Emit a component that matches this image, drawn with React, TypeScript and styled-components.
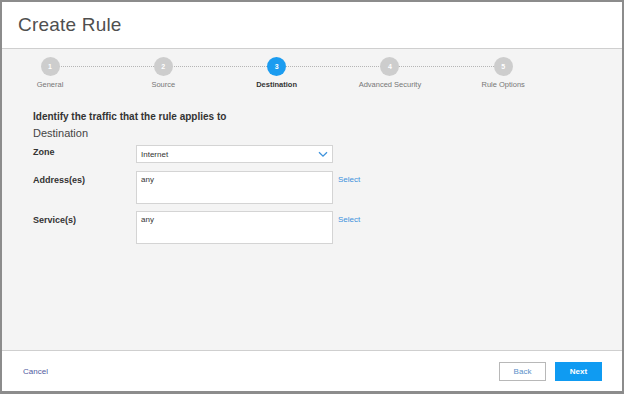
import React from "react";
import styled, { createGlobalStyle, css } from "styled-components";

const Global = createGlobalStyle`
  html, body { margin: 0; padding: 0; background: #fff; }
  body { font-family: "Liberation Sans", Arial, sans-serif; }
  * { box-sizing: border-box; }
`;

const Frame = styled.div`
  width: 624px;
  height: 394px;
  border: 2px solid #8c8c8c;
  border-bottom-width: 3px;
  display: flex;
  flex-direction: column;
  background: #fff;
`;

const Header = styled.div`
  height: 47px;
  flex: none;
  border-bottom: 1px solid #cfcfcf;
  padding: 12px 0 0 16px;
`;

const Title = styled.h1`
  margin: 0;
  font-size: 19px;
  font-weight: 400;
  color: #4f4f4f;
  letter-spacing: 0.2px;
`;

const Body = styled.div`
  flex: 1;
  background: #f4f4f4;
  border-bottom: 1px solid #cfcfcf;
  display: flex;
  flex-direction: column;
`;

const Stepper = styled.div`
  display: flex;
  gap: 75.3px;
  padding: 8px 0 0 29px;
  height: 62px;
`;

const Step = styled.div<{ $last?: boolean }>`
  width: 38px;
  display: flex;
  flex-direction: column;
  align-items: center;
  position: relative;
  ${(p) =>
    !p.$last &&
    css`
      &::after {
        content: "";
        position: absolute;
        top: 9px;
        left: 28px;
        width: 95px;
        border-top: 1px dotted #b5b5b5;
      }
    `}
`;

const Circle = styled.div<{ $active?: boolean }>`
  width: 19px;
  height: 19px;
  border-radius: 50%;
  background: ${(p) => (p.$active ? "#1b9cf0" : "#cdcdcd")};
  color: #fff;
  font-size: 7px;
  font-weight: 700;
  display: flex;
  align-items: center;
  justify-content: center;
  position: relative;
  z-index: 1;
`;

const StepLabel = styled.div<{ $active?: boolean }>`
  margin-top: 4px;
  font-size: 7.5px;
  white-space: nowrap;
  color: ${(p) => (p.$active ? "#333" : "#777")};
  font-weight: ${(p) => (p.$active ? 700 : 400)};
`;

const Content = styled.div`
  padding: 0 0 0 31px;
  display: flex;
  flex-direction: column;
`;

const Heading = styled.div`
  font-size: 10px;
  font-weight: 700;
  color: #333;
`;

const Section = styled.div`
  font-size: 11px;
  color: #444;
  margin-top: 5px;
`;

const Row = styled.div<{ $mt: number }>`
  display: flex;
  align-items: flex-start;
  margin-top: ${(p) => p.$mt}px;
`;

const Label = styled.div<{ $pt: number }>`
  width: 103px;
  flex: none;
  font-size: 9px;
  font-weight: 700;
  color: #333;
  padding-top: ${(p) => p.$pt}px;
`;

const SelectBox = styled.div`
  width: 197px;
  height: 18px;
  background: #fff;
  border: 1px solid #d4d4d4;
  display: flex;
  align-items: center;
  justify-content: space-between;
  padding: 0 4px 0 4px;
  font-size: 8px;
  color: #333;
`;

const TextBox = styled.div`
  width: 197px;
  height: 33px;
  background: #fff;
  border: 1px solid #d4d4d4;
  padding: 3px 4px;
  font-size: 8px;
  color: #333;
`;

const LinkText = styled.a`
  margin-left: 5px;
  padding-top: 4px;
  font-size: 8px;
  color: #3d92dc;
  text-decoration: none;
`;

const Footer = styled.div`
  height: 40px;
  flex: none;
  display: flex;
  align-items: center;
  padding: 0 20px 0 21px;
`;

const Cancel = styled.a`
  font-size: 8px;
  color: #4f5ba0;
  margin-top: 1px;
`;

const Spacer = styled.div`
  flex: 1;
`;

const Button = styled.button<{ $primary?: boolean }>`
  width: 47px;
  height: 19px;
  font-family: inherit;
  font-size: 8px;
  padding: 0;
  margin-left: 9px;
  border: 1px solid ${(p) => (p.$primary ? "#0f9bf2" : "#b8b8b8")};
  background: ${(p) => (p.$primary ? "#0f9bf2" : "#fff")};
  color: ${(p) => (p.$primary ? "#fff" : "#5a8fc8")};
  font-weight: ${(p) => (p.$primary ? 700 : 400)};
`;

const steps = ["General", "Source", "Destination", "Advanced Security", "Rule Options"];

export default function App() {
  return (
    <>
      <Global />
      <Frame>
        <Header>
          <Title>Create Rule</Title>
        </Header>
        <Body>
          <Stepper>
            {steps.map((s, i) => (
              <Step key={s} $last={i === steps.length - 1}>
                <Circle $active={i === 2}>{i + 1}</Circle>
                <StepLabel $active={i === 2}>{s}</StepLabel>
              </Step>
            ))}
          </Stepper>
          <Content>
            <Heading>Identify the traffic that the rule applies to</Heading>
            <Section>Destination</Section>
            <Row $mt={6}>
              <Label $pt={2}>Zone</Label>
              <SelectBox>
                <span>Internet</span>
                <svg width="10" height="7" viewBox="0 0 10 7">
                  <path d="M1 1.2 L5 5.2 L9 1.2" fill="none" stroke="#3d92dc" strokeWidth="1.3" />
                </svg>
              </SelectBox>
            </Row>
            <Row $mt={8}>
              <Label $pt={4}>Address(es)</Label>
              <TextBox>any</TextBox>
              <LinkText>Select</LinkText>
            </Row>
            <Row $mt={7}>
              <Label $pt={4}>Service(s)</Label>
              <TextBox>any</TextBox>
              <LinkText>Select</LinkText>
            </Row>
          </Content>
        </Body>
        <Footer>
          <Cancel>Cancel</Cancel>
          <Spacer />
          <Button>Back</Button>
          <Button $primary>Next</Button>
        </Footer>
      </Frame>
    </>
  );
}
